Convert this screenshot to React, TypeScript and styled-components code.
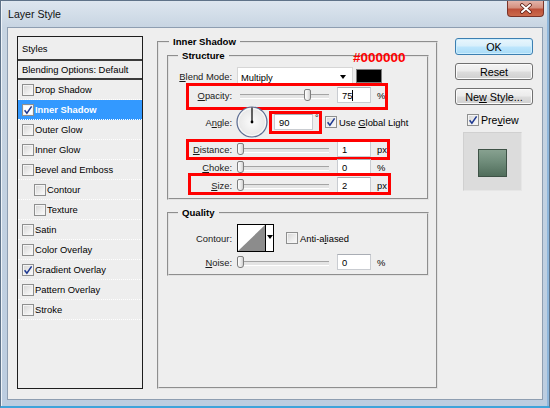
import React from "react";
import styled, { createGlobalStyle, css } from "styled-components";

const GlobalStyle = createGlobalStyle`
  html, body { margin: 0; padding: 0; }
  body {
    width: 550px;
    height: 408px;
    overflow: hidden;
    background: #eeeeee;
    font-family: "Liberation Sans", Arial, sans-serif;
    color: #000;
  }
  * { box-sizing: border-box; }
`;

type Mark = { t: number; r: number; b: number; l: number };

const Window = styled.div`
  width: 550px;
  height: 408px;
  display: flex;
  flex-direction: column;
  border: 1px solid #5f7389;
  border-bottom: 2px solid #3fa3da;
  background: linear-gradient(180deg, #dde6ef 0px, #c8d5e2 26px, #bccde0 100%);
  box-shadow: inset 1px 0 0 #eef3f8, inset -2px 0 0 #8fb7dc;
`;

const TitleBar = styled.div`
  height: 26px;
  display: flex;
  align-items: center;
  padding-left: 7px;
  font-size: 10.6px;
  color: #111;
`;

const CloseBtn = styled.div`
  width: 37px;
  height: 16px;
  margin-left: auto;
  margin-right: 5px;
  align-self: flex-start;
  border: 1px solid #7a3328;
  border-top: none;
  border-radius: 0 0 4px 4px;
  background: linear-gradient(180deg, #e3b3a9 0%, #d4907f 45%, #bd5039 55%, #cb6a4c 100%);
  display: flex;
  align-items: center;
  justify-content: center;
`;

const Body = styled.div`
  flex: 1;
  margin: 0 6px 6px 6px;
  background: #eeeeee;
  border: 1px solid #8e9eb1;
  display: flex;
  padding: 8px 0 10px 9px;
`;

/* ---- styles list ---- */

const StylesPanel = styled.div`
  width: 126px;
  flex-shrink: 0;
  border: 1px solid #1e1e1e;
  display: flex;
  flex-direction: column;
  font-size: 9.4px;
`;

const PanelHead = styled.div<{ $h: number }>`
  height: ${(p) => p.$h}px;
  display: flex;
  align-items: center;
  padding-left: 4px;
  border-bottom: 2px solid #3a3a3a;
  flex-shrink: 0;
`;

const EffectRow = styled.div<{ $sub?: boolean; $active?: boolean }>`
  height: 20px;
  display: flex;
  align-items: center;
  gap: 1px;
  padding-left: ${(p) => (p.$sub ? 16 : 4)}px;
  border-bottom: 1px dotted #ffffff;
  ${(p) =>
    p.$active &&
    css`
      background: #3399ff;
      color: #fff;
      font-weight: bold;
    `}
`;

/* ---- checkbox ---- */

const Box = styled.span<{ $white?: boolean }>`
  width: 12px;
  height: 12px;
  flex-shrink: 0;
  border: 1px solid #8e8f8f;
  background: ${(p) =>
    p.$white ? "#fff" : "linear-gradient(135deg, #d4d4d4 0%, #eeeeee 60%, #fbfbfb 100%)"};
  box-shadow: inset 0 0 0 1px #f4f4f4;
  display: inline-flex;
  align-items: center;
  justify-content: center;
`;

function Check({ on, white }: { on?: boolean; white?: boolean }) {
  return (
    <Box $white={white}>
      {on && (
        <svg width="10" height="10" viewBox="0 0 10 10">
          <path d="M1.6 5.2 L3.9 8.2 L8.6 1.4" fill="none" stroke="#1d3891" strokeWidth="1.5" />
        </svg>
      )}
    </Box>
  );
}

/* ---- group boxes ---- */

const Group = styled.fieldset<{ $w: number; $mt?: number }>`
  width: ${(p) => p.$w}px;
  margin: ${(p) => p.$mt || 0}px 0 0 0;
  padding: 0;
  min-width: 0;
  border: 2px groove #e2e2e2;
  flex-shrink: 0;
`;

const Legend = styled.legend<{ $ml: number }>`
  margin-left: ${(p) => p.$ml}px;
  padding: 0 4px;
  font-weight: bold;
  font-size: 9.6px;
  line-height: 12px;
`;

const GroupInner = styled.div<{ $pt: number; $pb: number; $pl?: number }>`
  padding: ${(p) => p.$pt}px 0 ${(p) => p.$pb}px ${(p) => p.$pl || 0}px;
  display: flex;
  flex-direction: column;
`;

const Row = styled.div<{ $h: number; $mark?: Mark }>`
  position: relative;
  display: flex;
  align-items: center;
  height: ${(p) => p.$h}px;
  font-size: 9.4px;
  ${(p) =>
    p.$mark &&
    css`
      &::after {
        content: "";
        position: absolute;
        top: ${p.$mark.t}px;
        right: ${p.$mark.r}px;
        bottom: ${p.$mark.b}px;
        left: ${p.$mark.l}px;
        border: 3px solid #ff0000;
        pointer-events: none;
      }
    `}
`;

const Label = styled.span`
  width: 63px;
  margin-right: 5px;
  text-align: right;
  flex-shrink: 0;
  color: #1a1a1a;
`;

const Select = styled.span`
  width: 116px;
  height: 18px;
  background: #fff;
  border: 1px solid #d6d6d6;
  display: flex;
  align-items: center;
  justify-content: space-between;
  padding: 2px 6px 0 3px;
`;

const DownArrow = styled.span`
  width: 0;
  height: 0;
  border-left: 3.5px solid transparent;
  border-right: 3.5px solid transparent;
  border-top: 4px solid #000;
`;

const Swatch = styled.span`
  width: 26px;
  height: 14px;
  margin-left: 3px;
  background: #000;
  border: 1px solid #7c7c7c;
`;

const ColorNote = styled.span`
  position: absolute;
  left: 184px;
  top: -15px;
  font-size: 13.5px;
  line-height: 14px;
  font-weight: bold;
  color: #ff0000;
`;

const Track = styled.span`
  position: relative;
  width: 95px;
  height: 12px;
  margin-right: 5px;
  flex-shrink: 0;
  &::before {
    content: "";
    position: absolute;
    left: 3px;
    width: 89px;
    top: 5px;
    height: 3px;
    background: #e4e4e4;
    border-top: 1px solid #a4a4a4;
    border-bottom: 1px solid #fff;
  }
`;

const Thumb = styled.span`
  position: absolute;
  top: 0;
  width: 7px;
  height: 12px;
  border: 1px solid #7d7d7d;
  border-radius: 2px 2px 3px 3px;
  background: linear-gradient(90deg, #ffffff 0%, #e9e9e9 60%, #cfcfcf 100%);
`;

function Slider({ value }: { value: number }) {
  return (
    <Track>
      <Thumb style={{ left: Math.round(value * 89) }} />
    </Track>
  );
}

const Field = styled.span<{ $w?: number }>`
  width: ${(p) => p.$w || 34}px;
  height: 16px;
  flex-shrink: 0;
  background: #fff;
  border: 1px solid #c9ccd1;
  border-top-color: #a9adb4;
  display: flex;
  align-items: center;
  padding: 1px 0 0 4px;
  font-size: 9.4px;
`;

const Caret = styled.span`
  width: 1px;
  height: 11px;
  background: #000;
`;

const Unit = styled.span`
  margin-left: 6px;
`;

const AngleBox = styled.span`
  width: 53px;
  height: 23px;
  margin-left: 1px;
  border: 3px solid #ff0000;
  display: flex;
  align-items: flex-start;
  padding-left: 2px;
`;

const Degree = styled.span`
  margin-left: 2px;
  font-size: 9px;
  line-height: 9px;
`;

const CheckLabel = styled.span<{ $ml: number }>`
  display: flex;
  align-items: center;
  gap: 2px;
  margin-left: ${(p) => p.$ml}px;
`;

const ContourPick = styled.span`
  width: 37px;
  height: 28px;
  display: flex;
  border: 1px solid #000;
  background: #fff;
`;

const PickArrow = styled.span`
  flex: 1;
  border-left: 1px solid #000;
  display: flex;
  align-items: center;
  justify-content: center;
  padding-bottom: 3px;
`;

/* ---- buttons column ---- */

const Side = styled.div`
  width: 78px;
  margin-left: 17px;
  padding-top: 2px;
  display: flex;
  flex-direction: column;
  gap: 8px;
`;

const Button = styled.div<{ $primary?: boolean }>`
  height: 17px;
  display: flex;
  align-items: center;
  justify-content: center;
  border: 1px solid #707070;
  border-radius: 3px;
  font-size: 10.8px;
  background: linear-gradient(180deg, #f4f4f4 0%, #ebebeb 48%, #dddddd 52%, #cfcfcf 100%);
  box-shadow: inset 0 0 0 1px #fbfbfb;
  ${(p) =>
    p.$primary &&
    css`
      border-color: #3c7fb1;
      background: linear-gradient(180deg, #e9f6fd 0%, #d8effb 48%, #bee6fd 52%, #a9dbf6 100%);
      box-shadow: inset 0 0 0 1px #cdeefe;
    `}
`;

const PreviewRow = styled.div`
  height: 18px;
  margin-top: -2px;
  padding-left: 12px;
  display: flex;
  align-items: center;
  gap: 2px;
  font-size: 10.6px;
`;

const PreviewFrame = styled.div`
  width: 59px;
  height: 59px;
  margin: -5px 0 0 8px;
  background: #dcdcdc;
  border: 1px solid #d0d0d0;
  border-right-color: #e6e6e6;
  border-bottom-color: #e6e6e6;
  display: flex;
  align-items: center;
  justify-content: center;
`;

const PreviewSwatch = styled.div`
  width: 29px;
  height: 28px;
  margin-top: 2px;
  border: 1px solid #3e5246;
  background: linear-gradient(180deg, #87a190 0%, #6f8c7a 45%, #506d5b 100%);
`;

const effects = [
  { name: "Drop Shadow" },
  { name: "Inner Shadow", on: true, active: true },
  { name: "Outer Glow" },
  { name: "Inner Glow" },
  { name: "Bevel and Emboss" },
  { name: "Contour", sub: true },
  { name: "Texture", sub: true },
  { name: "Satin" },
  { name: "Color Overlay" },
  { name: "Gradient Overlay", on: true },
  { name: "Pattern Overlay" },
  { name: "Stroke" },
];

export default function App() {
  return (
    <>
      <GlobalStyle />
      <Window>
        <TitleBar>
          <span>Layer Style</span>
          <CloseBtn>
            <svg width="14" height="11" viewBox="0 0 14 11">
              <path d="M3 2 L11 9 M11 2 L3 9" stroke="#5a1b12" strokeWidth="3.6" strokeLinecap="round" />
              <path d="M3 2 L11 9 M11 2 L3 9" stroke="#fff" strokeWidth="2" strokeLinecap="round" />
            </svg>
          </CloseBtn>
        </TitleBar>
        <Body>
          <StylesPanel>
            <PanelHead $h={24}>Styles</PanelHead>
            <PanelHead $h={19}>Blending Options: Default</PanelHead>
            {effects.map((e) => (
              <EffectRow key={e.name} $sub={e.sub} $active={e.active}>
                <Check on={e.on} white={e.active} />
                <span>{e.name}</span>
              </EffectRow>
            ))}
          </StylesPanel>

          <Group $w={281} style={{ marginLeft: 14 }}>
            <Legend $ml={10}>Inner Shadow</Legend>
            <GroupInner $pt={2} $pb={0} $pl={8}>
              <Group $w={262}>
                <Legend $ml={9}>Structure</Legend>
                <GroupInner $pt={4} $pb={4}>
                  <Row $h={20}>
                    <ColorNote>#000000</ColorNote>
                    <Label>
                      <u>B</u>lend Mode:
                    </Label>
                    <Select>
                      <span>Multiply</span>
                      <DownArrow />
                    </Select>
                    <Swatch />
                  </Row>
                  <Row $h={18} $mark={{ t: -3, r: 39, b: -6, l: 17 }}>
                    <Label>
                      <u>O</u>pacity:
                    </Label>
                    <Slider value={0.75} />
                    <Field>
                      <span>75</span>
                      <Caret />
                    </Field>
                    <Unit>%</Unit>
                  </Row>
                  <Row $h={36}>
                    <Label>
                      A<u>n</u>gle:
                    </Label>
                    <svg width="32" height="32" viewBox="0 0 32 32" style={{ marginLeft: -1 }}>
                      <defs>
                        <radialGradient id="dial" cx="50%" cy="50%" r="50%">
                          <stop offset="0" stopColor="#fbfbfb" />
                          <stop offset="1" stopColor="#e6e6e6" />
                        </radialGradient>
                      </defs>
                      <circle cx="16" cy="16" r="15" fill="url(#dial)" stroke="#5b6c93" strokeWidth="1.2" />
                      <circle cx="16" cy="16" r="13.6" fill="none" stroke="#ffffff" strokeWidth="0.8" />
                      <line x1="16" y1="16" x2="16" y2="1.5" stroke="#000" strokeWidth="1.2" />
                      <circle cx="16" cy="16" r="1.4" fill="#000" />
                    </svg>
                    <AngleBox>
                      <Field $w={39}>90</Field>
                      <Degree>°</Degree>
                    </AngleBox>
                    <CheckLabel $ml={3}>
                      <Check on />
                      <span>
                        Use <u>G</u>lobal Light
                      </span>
                    </CheckLabel>
                  </Row>
                  <Row $h={18} $mark={{ t: -1, r: 37, b: -2, l: 17 }}>
                    <Label>
                      <u>D</u>istance:
                    </Label>
                    <Slider value={0} />
                    <Field>1</Field>
                    <Unit>px</Unit>
                  </Row>
                  <Row $h={18}>
                    <Label>
                      <u>C</u>hoke:
                    </Label>
                    <Slider value={0} />
                    <Field>0</Field>
                    <Unit>%</Unit>
                  </Row>
                  <Row $h={18} $mark={{ t: -3, r: 36, b: -1, l: 19 }}>
                    <Label>
                      <u>S</u>ize:
                    </Label>
                    <Slider value={0} />
                    <Field>2</Field>
                    <Unit>px</Unit>
                  </Row>
                </GroupInner>
              </Group>

              <Group $w={262} $mt={7}>
                <Legend $ml={9}>Quality</Legend>
                <GroupInner $pt={5} $pb={2}>
                  <Row $h={28}>
                    <Label>Contour:</Label>
                    <ContourPick>
                      <svg width="27" height="26" viewBox="0 0 27 26">
                        <polygon points="0,26 27,0 27,26" fill="#8c8c8c" />
                      </svg>
                      <PickArrow>
                        <DownArrow />
                      </PickArrow>
                    </ContourPick>
                    <CheckLabel $ml={12}>
                      <Check />
                      <span>
                        Anti-a<u>l</u>iased
                      </span>
                    </CheckLabel>
                  </Row>
                  <Row $h={20}>
                    <Label>
                      <u>N</u>oise:
                    </Label>
                    <Slider value={0} />
                    <Field>0</Field>
                    <Unit>%</Unit>
                  </Row>
                </GroupInner>
              </Group>
            </GroupInner>
          </Group>

          <Side>
            <Button $primary>OK</Button>
            <Button>Reset</Button>
            <Button>
              <span>
                Ne<u>w</u> Style...
              </span>
            </Button>
            <PreviewRow>
              <Check on />
              <span>
                Pre<u>v</u>iew
              </span>
            </PreviewRow>
            <PreviewFrame>
              <PreviewSwatch />
            </PreviewFrame>
          </Side>
        </Body>
      </Window>
    </>
  );
}
